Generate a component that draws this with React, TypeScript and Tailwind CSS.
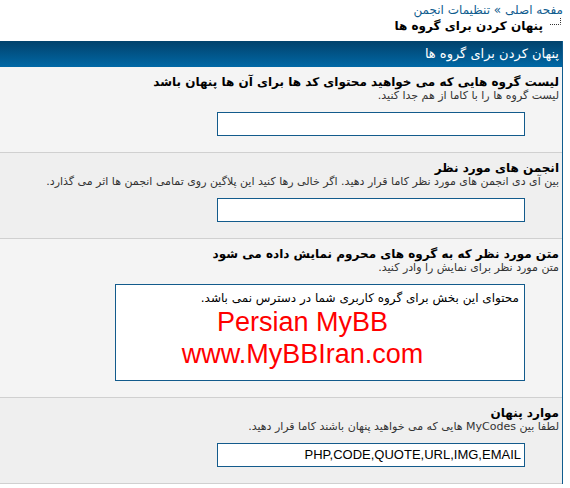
import React from "react";

const persian = "font-['DejaVu_Sans',sans-serif]";

type Row = { title: string; desc: React.ReactNode; alt?: boolean; children: React.ReactNode };

function SettingRow({ title, desc, alt, children }: Row) {
  return (
    <div className={`border-b border-[#d0d0d0] pr-[3px] pt-[8px] pb-[16px] ${alt ? "bg-[#efefef]" : "bg-[#f4f4f4]"}`}>
      <div className="text-[12px] font-bold leading-[14px] text-black">{title}</div>
      <div className="text-[11px] leading-[14px] text-[#333]">{desc}</div>
      <div className="mt-[9px] mr-[34px]">{children}</div>
    </div>
  );
}

function TextBox({ value }: { value?: string }) {
  return (
    <div className="flex h-[24px] w-[308px] items-center border border-[#135b8c] bg-white pr-[3px] font-['Liberation_Sans',sans-serif] text-[13px] text-black">
      {value}
    </div>
  );
}

export default function App() {
  return (
    <div dir="rtl" className={`h-[488px] w-[570px] overflow-hidden bg-white ${persian}`}>
      <div className="h-[41px] pr-[7px]">
        <div className="pt-[2px] text-[12px] leading-[16px] text-[#0f5c8e]">
          مفحه اصلی » تنظیمات انجمن
        </div>
        <div className="flex items-start">
          <svg width="14" height="16" viewBox="0 0 14 16" className="shrink-0" aria-hidden>
            <path d="M11.5 0 V6.5 H1" stroke="#333" strokeDasharray="1 1" fill="none" />
          </svg>
          <span className="mr-[6px] text-[12px] font-bold leading-[16px] text-black">پنهان کردن برای گروه ها</span>
        </div>
      </div>

      <div className="mr-[7px] w-[563px] border-r border-[#0f5c8e]">
        <div className="h-[26px] bg-gradient-to-b from-[#02426c] to-[#0068a6] pr-[3px] text-[13px] leading-[26px] text-white">
          پنهان کردن برای گروه ها
        </div>

        <SettingRow
          title="لیست گروه هایی که می خواهید محتوای کد ها برای آن ها پنهان باشد"
          desc="لیست گروه ها را با کاما از هم جدا کنید."
        >
          <TextBox />
        </SettingRow>

        <SettingRow
          alt
          title="انجمن های مورد نظر"
          desc="بین آی دی انجمن های مورد نظر کاما قرار دهید. اگر خالی رها کنید این پلاگین روی تمامی انجمن ها اثر می گذارد."
        >
          <TextBox />
        </SettingRow>

        <SettingRow
          title="متن مورد نظر که به گروه های محروم نمایش داده می شود"
          desc="متن مورد نظر برای نمایش را وادر کنید."
        >
          <div className="h-[97px] w-[410px] border border-[#135b8c] bg-white">
            <div className="pr-[5px] pt-[5px] text-[12px] leading-[16px] text-black">
              محتوای این بخش برای گروه کاربری شما در دسترس نمی باشد.
            </div>
            <div dir="ltr" className="flex flex-col items-center pr-[35px] font-['Liberation_Sans',sans-serif] text-[27px] leading-[32px] text-[#ff0000]">
              <span>Persian MyBB</span>
              <span>www.MyBBIran.com</span>
            </div>
          </div>
        </SettingRow>

        <SettingRow
          alt
          title="موارد پنهان"
          desc={<>لطفا بین MyCodes هایی که می خواهید پنهان باشند کاما قرار دهید.</>}
        >
          <TextBox value="PHP,CODE,QUOTE,URL,IMG,EMAIL" />
        </SettingRow>
      </div>
    </div>
  );
}
